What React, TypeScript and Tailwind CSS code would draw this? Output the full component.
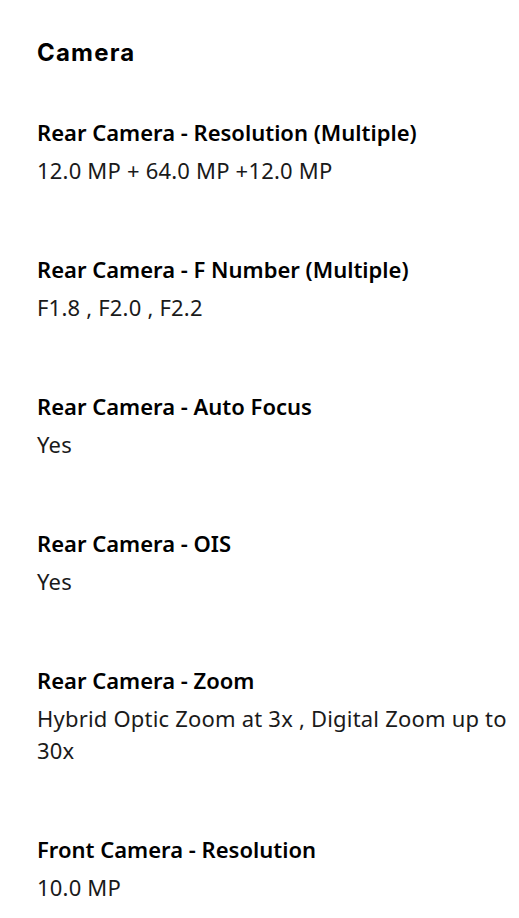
import React from 'react';

const specs = [
  { title: 'Rear Camera - Resolution (Multiple)', value: '12.0 MP + 64.0 MP +12.0 MP' },
  { title: 'Rear Camera - F Number (Multiple)', value: 'F1.8 , F2.0 , F2.2' },
  { title: 'Rear Camera - Auto Focus', value: 'Yes' },
  { title: 'Rear Camera - OIS', value: 'Yes' },
  { title: 'Rear Camera - Zoom', value: 'Hybrid Optic Zoom at 3x , Digital Zoom up to 30x' },
  { title: 'Front Camera - Resolution', value: '10.0 MP' },
];

const App = () => {
  return (
    <div className="min-h-screen w-[519px] overflow-hidden bg-white pl-[37px] pr-[10px] pt-[37px] text-black">
      <h2 className="font-['Inter',sans-serif] text-[24px] font-bold leading-[32px] tracking-[1.2px]">
        Camera
      </h2>
      <dl className="mt-[47px] flex flex-col gap-[67px] font-['Noto_Sans',sans-serif]">
        {specs.map((spec) => (
          <div key={spec.title}>
            <dt className="text-[22px] font-semibold leading-[32px]">{spec.title}</dt>
            <dd className="mt-[6px] text-[22px] font-normal leading-[32px] tracking-[0.2px] text-[#1a1a1a]">
              {spec.value}
            </dd>
          </div>
        ))}
      </dl>
    </div>
  );
};

export default App;
